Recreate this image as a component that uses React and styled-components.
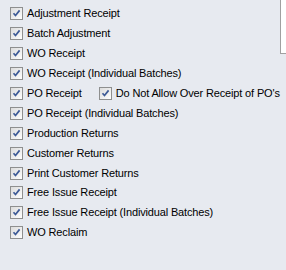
import React from "react";
import styled, { createGlobalStyle } from "styled-components";

const Global = createGlobalStyle`
  html, body { margin: 0; padding: 0; }
  body {
    background: #e7eaf0;
    font-family: "Liberation Sans", Arial, sans-serif;
    font-size: 11px;
    color: #000;
    width: 286px;
    height: 270px;
    overflow: hidden;
  }
`;

const Page = styled.div`
  display: grid;
  grid-template-columns: 1fr 6px;
  grid-template-rows: auto;
  width: 286px;
  height: 270px;
  background: #e7eaf0;
`;

const List = styled.div`
  grid-column: 1;
  grid-row: 1;
  display: flex;
  flex-direction: column;
  padding: 4px 0 0 10px;
  white-space: nowrap;
`;

const SidePanel = styled.div`
  grid-column: 2;
  grid-row: 1;
  align-self: start;
  background: #ffffff;
  border-left: 1px solid #a0a0a0;
  border-bottom: 1px solid #a0a0a0;
  box-sizing: border-box;
  height: 54px;
`;

const Row = styled.div`
  display: flex;
  align-items: center;
  height: 19.9px;
  gap: ${(p) => p.$gap || 0}px;
`;

const Item = styled.label`
  display: flex;
  align-items: center;
  gap: 4px;
`;

const Box = styled.span`
  display: inline-block;
  width: 13px;
  height: 13px;
  flex: none;
  box-sizing: border-box;
  border: 1px solid #8e8f8f;
  background: linear-gradient(135deg, #dcdcdc 0%, #f0f0f0 60%, #ffffff 100%);
  position: relative;
`;

const Label = styled.span`
  line-height: 13px;
  letter-spacing: -0.15px;
`;

function Check() {
  return (
    <Box>
      <svg width="11" height="11" viewBox="0 0 11 11" style={{ position: "absolute", left: 0, top: 0 }}>
        <path d="M2.5 5.2 L4.5 7.5 L8.6 2.4" fill="none" stroke="#3d5a96" strokeWidth="1.7" />
      </svg>
    </Box>
  );
}

function CheckItem({ children }) {
  return (
    <Item>
      <Check />
      <Label>{children}</Label>
    </Item>
  );
}

const items = [
  ["Adjustment Receipt"],
  ["Batch Adjustment"],
  ["WO Receipt"],
  ["WO Receipt (Individual Batches)"],
  ["PO Receipt", "Do Not Allow Over Receipt of PO's"],
  ["PO Receipt (Individual Batches)"],
  ["Production Returns"],
  ["Customer Returns"],
  ["Print Customer Returns"],
  ["Free Issue Receipt"],
  ["Free Issue Receipt (Individual Batches)"],
  ["WO Reclaim"],
];

export default function App() {
  return (
    <>
      <Global />
      <Page>
        <List>
          {items.map((r, i) => (
            <Row key={i} $gap={r.length > 1 ? 17 : 0}>
              {r.map((t) => (
                <CheckItem key={t}>{t}</CheckItem>
              ))}
            </Row>
          ))}
        </List>
        <SidePanel />
      </Page>
    </>
  );
}
